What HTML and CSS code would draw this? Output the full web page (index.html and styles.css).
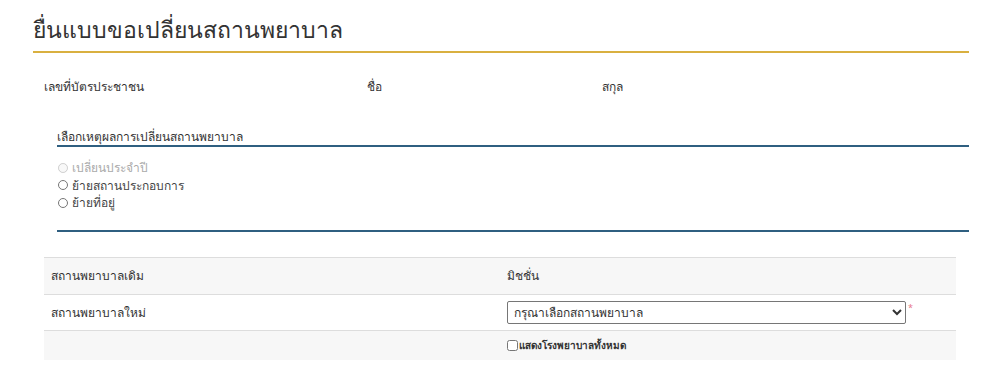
FILE: index.html
```html
<!DOCTYPE html>
<html lang="th">
<head>
    <meta charset="UTF-8">
    <title>ยื่นแบบขอเปลี่ยนสถานพยาบาล</title>
    <link rel="stylesheet" href="styles.css">
</head>
<body>
    <div class="page">
        <h1 class="title">ยื่นแบบขอเปลี่ยนสถานพยาบาล</h1>

        <div class="info-row">
            <div class="info-item">เลขที่บัตรประชาชน</div>
            <div class="info-item">ชื่อ</div>
            <div class="info-item">สกุล</div>
        </div>

        <fieldset class="reason">
            <legend>เลือกเหตุผลการเปลี่ยนสถานพยาบาล</legend>
            <label class="radio disabled"><input type="radio" name="reason" disabled> เปลี่ยนประจำปี</label>
            <label class="radio"><input type="radio" name="reason"> ย้ายสถานประกอบการ</label>
            <label class="radio"><input type="radio" name="reason"> ย้ายที่อยู่</label>
        </fieldset>

        <table class="hosp-table">
            <tr class="odd">
                <td class="label">สถานพยาบาลเดิม</td>
                <td>มิชชั่น</td>
            </tr>
            <tr>
                <td class="label">สถานพยาบาลใหม่</td>
                <td>
                    <select class="hosp-select">
                        <option>กรุณาเลือกสถานพยาบาล</option>
                    </select><span class="req">*</span>
                </td>
            </tr>
            <tr class="odd short">
                <td></td>
                <td><label class="show-all"><input type="checkbox">แสดงโรงพยาบาลทั้งหมด</label></td>
            </tr>
        </table>
    </div>
</body>
</html>
```

FILE: styles.css
```css
* {
    box-sizing: border-box;
}

body {
    margin: 0;
    font-family: "Noto Sans", "Open Sans", sans-serif;
    font-size: 12px;
    color: #333;
    background: #fff;
}

.page {
    width: 936px;
    margin-left: 33px;
    padding-top: 12px;
}

.title {
    margin: 0;
    font-size: 23px;
    font-weight: 400;
    line-height: 34px;
    padding-bottom: 5px;
    border-bottom: 2px solid #d9b040;
}

.info-row {
    display: grid;
    grid-template-columns: 323px 235px 1fr;
    padding: 25px 0 0 11px;
    line-height: 18px;
}

.reason {
    margin: 33px 0 0 24px;
    padding: 0 0 18px;
    border: none;
    border-bottom: 2px solid #2f5f80;
}

.reason legend {
    width: 100%;
    padding: 0;
    margin-bottom: 12px;
    font-size: 12px;
    line-height: 16px;
    border-bottom: 2px solid #2f5f80;
}

.radio {
    display: flex;
    align-items: center;
    gap: 4px;
    height: 17.5px;
    font-size: 12px;
    color: #444;
}

.radio input {
    margin: 0 0 0 1px;
    width: 10px;
    height: 10px;
}

.radio.disabled {
    color: #aaa;
}

.hosp-table {
    margin: 25px 0 0 11px;
    width: 912px;
    border-collapse: collapse;
}

.hosp-table td {
    border-top: 1px solid #ddd;
    padding: 0 7px;
    height: 36px;
    vertical-align: middle;
}

.hosp-table tr.odd:first-child td {
    height: 37px;
}

.hosp-table td.label {
    width: 456px;
}

.hosp-table tr.odd td {
    background: #f7f7f7;
}

.hosp-table tr.short td {
    height: 30px;
}

.hosp-select {
    width: 399px;
    height: 23px;
    font-family: inherit;
    font-size: 12px;
    color: #333;
    border: 1px solid #767676;
    border-radius: 2px;
    background: #fff;
    padding: 0 2px;
    vertical-align: middle;
}

.req {
    color: #e8788a;
    font-size: 9px;
    vertical-align: top;
    margin-left: 2px;
}

.show-all {
    display: flex;
    align-items: center;
    font-size: 10px;
    font-weight: 600;
    color: #333;
}

.show-all input {
    margin: 0 1px 0 0;
    width: 11px;
    height: 11px;
}
```
